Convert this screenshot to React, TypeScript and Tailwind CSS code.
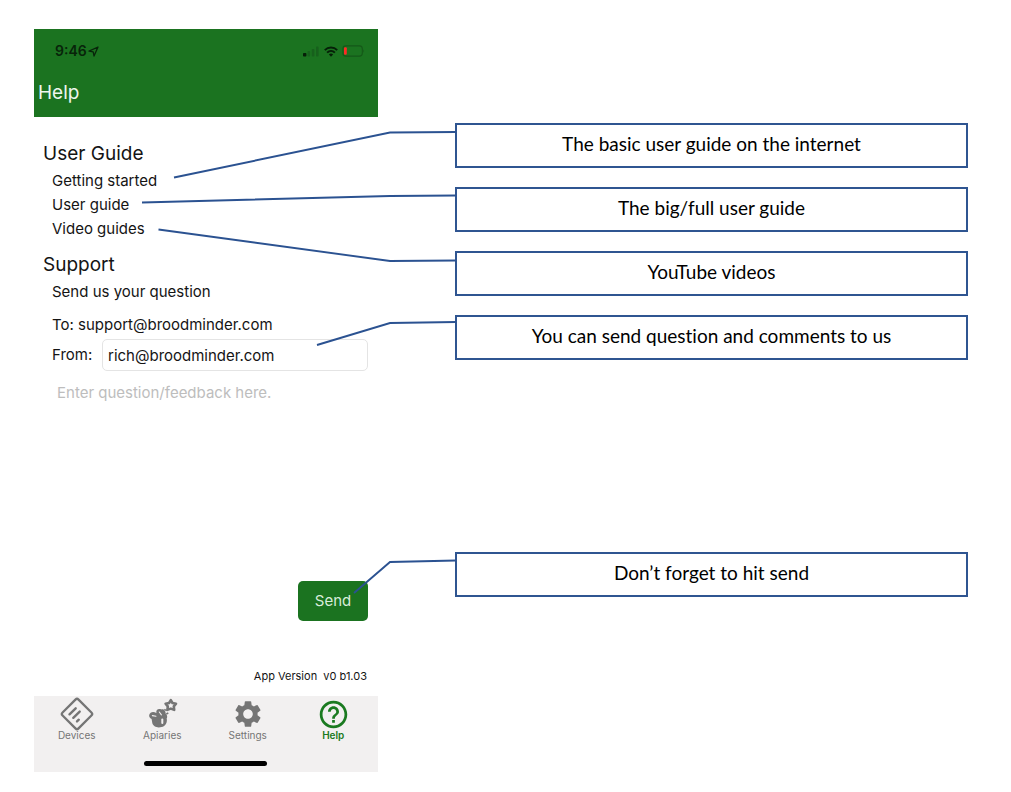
import React from "react";
import { MdHelpOutline, MdSettings } from "react-icons/md";

function StatusBar() {
  return (
    <div className="flex h-11 items-center justify-between pl-[21px] pr-[13px]">
      <div className="flex items-center gap-px text-sm font-semibold text-[#08240a]">
        <span>9:46</span>
        <svg width="11" height="11" viewBox="0 0 11 11" fill="none" stroke="currentColor" strokeWidth="1.3" strokeLinejoin="round" aria-hidden="true">
          <path d="M10 1 L1 5.2 L5.2 5.8 L6 10 Z" />
        </svg>
      </div>
      <div className="flex items-center gap-1" aria-hidden="true">
        <svg width="17" height="11" viewBox="0 0 17 11">
          <rect x="0" y="7" width="3.4" height="3.6" rx=".8" fill="#061f08" />
          <rect x="4.5" y="5" width="2.6" height="5.5" rx=".8" fill="#17601c" />
          <rect x="8.8" y="3" width="2.6" height="7.5" rx=".8" fill="#17601c" />
          <rect x="13" y="0.6" width="2.6" height="9.9" rx=".8" fill="#17601c" />
        </svg>
        <svg width="14" height="11" viewBox="0 0 14 11" fill="none" stroke="#061f08" strokeWidth="1.9">
          <path d="M.8 4.1 C4.2 .6 9.8 .6 13.2 4.1" />
          <path d="M3.1 6.6 C5.3 4.4 8.7 4.4 10.9 6.6" />
          <path d="M4.9 8.4 Q7 6.8 9.1 8.4 L7 10.8 Z" fill="#061f08" stroke="none" />
        </svg>
        <svg width="23" height="12" viewBox="0 0 23 12">
          <rect x=".9" y=".9" width="19.4" height="10.2" rx="2.8" fill="none" stroke="#155818" strokeWidth="1.1" />
          <rect x="2" y="2.3" width="2.8" height="7.4" rx="1" fill="#ff2a24" />
          <path d="M21.3 4.2 Q22.8 6 21.3 7.8 Z" fill="#155818" />
        </svg>
      </div>
    </div>
  );
}

function DevicesIcon() {
  return (
    <svg width="34" height="34" viewBox="0 0 34 34" fill="none" stroke="currentColor" strokeLinecap="round" aria-hidden="true">
      <rect x="5.7" y="5.7" width="22.6" height="22.6" rx="2.2" strokeWidth="2.3" transform="rotate(45 17 17)" />
      <g strokeWidth="2.4">
        <path d="M9.5 17.3 L15.7 11.3" />
        <path d="M13.3 20.8 L19.7 14.6" />
        <path d="M17 24.4 L18.8 22.7" />
      </g>
    </svg>
  );
}

function ApiariesIcon() {
  return (
    <svg width="36" height="34" viewBox="0 0 36 34" aria-hidden="true">
      <path
        fill="currentColor"
        d="M5.2 18 C6 14.8 9.5 14.3 12.4 16 C11.6 12.6 14.6 11.2 17.3 12.4 C19.5 11.6 22 14 21.6 16.5 C23.6 18.2 23.4 20.3 22.7 21.4 C23.6 25 21.5 29.5 17.5 30 C13.5 31.2 9 29.6 8.3 26 L7.6 22 C5.8 21.3 4.9 19.6 5.2 18 Z"
      />
      <g fill="none" stroke="#f2f0f0" strokeWidth="1.1" strokeLinecap="round">
        <path d="M8.4 18.6 L12 19.2" />
        <path d="M15.3 15 L17.4 17.8" />
        <path d="M18.3 22.6 L18.3 26" strokeWidth="2" />
      </g>
      <g fill="none" stroke="currentColor">
        <path d="M20.4 12.2 L22.6 13.8 M22.3 17 L24.3 16" strokeWidth="1.4" />
        <path
          d="M26.8 3.2 L28.5 6 L32 6.7 L29.8 9.4 L30.2 12.9 L26.8 11.6 L23.4 12.9 L23.8 9.4 L21.6 6.7 L25.1 6 Z"
          strokeWidth="2.6"
          strokeLinejoin="round"
        />
      </g>
    </svg>
  );
}

const tabs = [
  { label: "Devices", icon: <DevicesIcon />, tone: "text-[#757575]" },
  { label: "Apiaries", icon: <ApiariesIcon />, tone: "text-[#757575]" },
  { label: "Settings", icon: <MdSettings size={32} />, tone: "text-[#757575]" },
  { label: "Help", icon: <MdHelpOutline size={33} />, tone: "font-semibold text-[#1a7a20]" },
];

function Phone() {
  return (
    <main className="flex w-[344px] shrink-0 flex-col">
      <header className="bg-[#1b7320]">
        <StatusBar />
        <h1 className="flex h-11 items-center px-1 pb-1 text-[19px] text-[#eef6ee]">Help</h1>
      </header>

      <section className="px-[9px] pt-[25px]">
        <h2 className="text-[19px] leading-6">User Guide</h2>
        <ul className="pl-[9px] pt-[3px] text-[15px] leading-6">
          <li><a href="#getting-started">Getting started</a></li>
          <li><a href="#user-guide">User guide</a></li>
          <li><a href="#video-guides">Video guides</a></li>
        </ul>
      </section>

      <form className="flex flex-col pl-[9px] pr-[10px] pt-3" onSubmit={(e) => e.preventDefault()}>
        <h2 className="text-[19px] leading-6">Support</h2>
        <div className="flex flex-col pl-[9px] text-[15px]">
          <p className="pt-[3px] leading-6">Send us your question</p>
          <p className="pt-[9px] leading-6">To: support@broodminder.com</p>
          <div className="flex items-center pt-[2px]">
            <label htmlFor="from" className="w-[50px]">From:</label>
            <input
              id="from"
              type="email"
              defaultValue="rich@broodminder.com"
              className="h-8 min-w-0 flex-1 rounded-[5px] border border-[#e4e4e4] px-[5px]"
            />
          </div>
          <textarea
            aria-label="Question or feedback"
            placeholder="Enter question/feedback here."
            className="mt-[10px] h-[170px] resize-none px-[5px] leading-6 placeholder:text-[#bdbdbd]"
          />
        </div>
        <button type="submit" className="mt-[30px] h-10 w-[70px] self-end rounded-[5px] bg-[#1b7320] text-[15px] text-[#d9ecda]">
          Send
        </button>
      </form>

      <p className="whitespace-pre px-[11px] pb-3 pt-[47px] text-right text-[11px] leading-4">App Version  v0 b1.03</p>

      <nav className="flex flex-col items-center bg-[#f2f0f0] pb-[6px] pr-[2px]">
        <div className="grid w-full grid-cols-4">
          {tabs.map((tab) => (
            <button key={tab.label} type="button" className={`flex flex-col items-center text-[10px] leading-3 ${tab.tone}`}>
              <span className="flex h-[33px] items-center justify-center pt-[3px]">{tab.icon}</span>
              <span>{tab.label}</span>
            </button>
          ))}
        </div>
        <div className="mt-5 h-[5px] w-[123px] rounded-full bg-black" />
      </nav>
    </main>
  );
}

function Callout({ children }: { children: React.ReactNode }) {
  return (
    <p className="flex h-[45px] items-center justify-center border-2 border-[#2f5591] bg-white pb-[2px] text-[19px] text-black [font-variant-ligatures:none]">
      {children}
    </p>
  );
}

function Connectors() {
  return (
    <svg className="pointer-events-none absolute left-0 top-0" width="456" height="600" viewBox="0 0 456 600" fill="none" stroke="#2b5291" strokeWidth="1.9" aria-hidden="true">
      <path d="M174 177.5 L390 132.5 L456 132" />
      <path d="M142 202.5 L390 196 L456 195.5" />
      <path d="M158.5 229.5 L390 261 L456 260.5" />
      <path d="M317 345 L390 323 L456 322" />
      <path d="M354 593 L390 562 L456 560.5" />
    </svg>
  );
}

export default function App() {
  return (
    <div className="relative flex min-h-screen gap-[77px] bg-white pb-5 pl-[34px] pr-[43px] pt-[29px] font-['Inter',sans-serif] text-[#141414]">
      <Phone />
      <aside className="flex flex-1 flex-col gap-[19px] pt-[94px] font-['Lato',sans-serif]">
        <Callout>The basic user guide on the internet</Callout>
        <Callout>The big/full user guide</Callout>
        <Callout>YouTube videos</Callout>
        <Callout>You can send question and comments to us</Callout>
        <div className="pt-[173px]">
          <Callout>Don’t forget to hit send</Callout>
        </div>
      </aside>
      <Connectors />
    </div>
  );
}
